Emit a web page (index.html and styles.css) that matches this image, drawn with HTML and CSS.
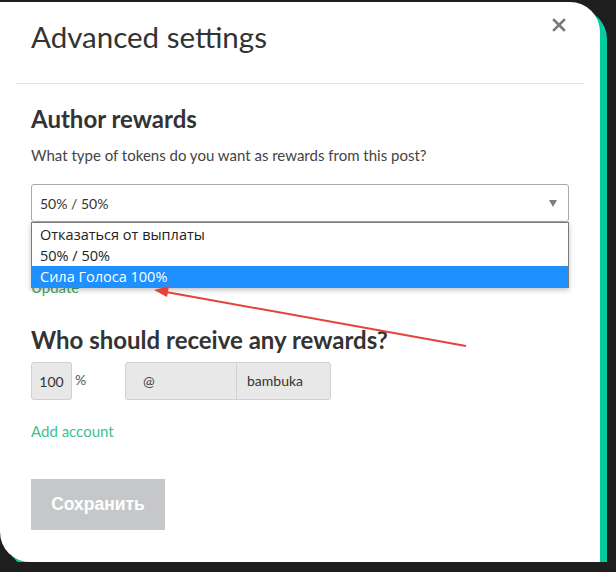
FILE: index.html
```html
<!DOCTYPE html>
<html lang="en">
<head>
  <meta charset="UTF-8">
  <title>Advanced settings</title>
  <link rel="stylesheet" href="styles.css">
</head>
<body>
  <div class="modal">
    <!-- close button -->
    <button class="close" aria-label="Close">
      <svg width="14" height="14" viewBox="0 0 14 14">
        <path d="M2 2 L12 12 M12 2 L2 12" stroke="#7a7a7a" stroke-width="2.6" stroke-linecap="square"/>
      </svg>
    </button>

    <div class="modal-header">
      <h1>Advanced settings</h1>
    </div>

    <div class="modal-body">
      <h2 class="section-title">Author rewards</h2>
      <p class="hint">What type of tokens do you want as rewards from this post?</p>

      <div class="select-wrap">
        <div class="select">
          <span>50% / 50%</span>
          <span class="caret"></span>
        </div>
        <ul class="options">
          <li>Отказаться от выплаты</li>
          <li>50% / 50%</li>
          <li class="active">Сила Голоса 100%</li>
        </ul>
      </div>
      <a class="link update" href="#">Update</a>

      <h2 class="section-title second">Who should receive any rewards?</h2>
      <div class="beneficiary">
        <div class="percent-box">100</div>
        <span class="percent-sign">%</span>
        <div class="account">
          <span class="at">@</span>
          <span class="account-name">bambuka</span>
        </div>
      </div>
      <a class="link add-account" href="#">Add account</a>

      <button class="save-btn">Сохранить</button>
    </div>

    <!-- red annotation arrow -->
    <svg class="annotation" width="600" height="560" viewBox="0 0 600 560">
      <line x1="466" y1="344" x2="166" y2="290" stroke="#e5423a" stroke-width="2"/>
      <polygon points="154,288 169,284 167,295" fill="#e5423a"/>
    </svg>
  </div>
</body>
</html>
```

FILE: styles.css
```css
/* page */
body {
  margin: 0;
  background: #1e1e1e;
  font-family: 'Lato', 'Liberation Sans', sans-serif;
  color: #333;
  overflow: hidden;
}

/* modal box with teal offset shadow */
.modal {
  position: relative;
  margin-top: 2px;
  width: 600px;
  height: 560px;
  background: #fff;
  border-radius: 0 30px 0 30px;
  box-shadow: 7px 7px 0 #05cc9f;
}

.close {
  position: absolute;
  top: 16px;
  right: 34px;
  padding: 0;
  border: none;
  background: none;
  cursor: pointer;
}

.modal-header {
  margin: 0 16px;
  padding: 18px 15px 29px;
  border-bottom: 1px solid #e6e6e6;
}
.modal-header h1 {
  margin: 0;
  font-size: 29.5px;
  line-height: 34px;
  font-weight: 400;
  color: #333;
}

.modal-body {
  padding: 21px 31px 0;
}

.section-title {
  margin: 0;
  font-size: 24px;
  line-height: 28px;
  font-weight: 700;
  color: #333;
}
.section-title.second {
  margin-top: 29px;
}

.hint {
  margin: 12px 0 19px;
  font-size: 15px;
  line-height: 20px;
  color: #444;
}

/* select with opened option list */
.select-wrap {
  position: relative;
}
.select {
  display: flex;
  align-items: center;
  justify-content: space-between;
  height: 36px;
  padding: 0 11px 0 8px;
  border: 1px solid #a9a9a9;
  border-radius: 3px;
  font-size: 14px;
  color: #333;
}
.caret {
  width: 0;
  height: 0;
  border-left: 4px solid transparent;
  border-right: 4px solid transparent;
  border-top: 7px solid #7d7d7d;
}
.options {
  position: absolute;
  top: 38px;
  left: 0;
  right: 0;
  margin: 0;
  padding: 1px 0 0;
  list-style: none;
  background: #fff;
  border: 1px solid #7a7a7a;
  box-shadow: 0 2px 5px rgba(0, 0, 0, 0.25);
  z-index: 2;
  font-family: 'Open Sans', sans-serif;
  font-size: 14.5px;
}
.options li {
  height: 21px;
  line-height: 21px;
  padding-left: 8px;
  color: #222;
}
.options li.active {
  background: #1e90ff;
  color: #fff;
}

.link {
  display: block;
  width: max-content;
  font-size: 15px;
  line-height: 20px;
  color: #3fbf8e;
  text-decoration: none;
}
.update {
  margin-top: 55px;
  color: #4aa86c;
}

.beneficiary {
  display: flex;
  align-items: flex-start;
  margin-top: 8px;
}
.percent-box {
  width: 39px;
  height: 36px;
  line-height: 38px;
  text-align: center;
  background: #e8e8e8;
  border: 1px solid #d0d0d0;
  border-radius: 3px;
  font-size: 14px;
}
.percent-sign {
  margin: 9px 0 0 3px;
  width: 50px;
  font-size: 14px;
  color: #555;
}
.account {
  display: flex;
  height: 36px;
  border: 1px solid #d0d0d0;
  border-radius: 3px;
  background: #e8e8e8;
  font-size: 14px;
  line-height: 36px;
}
.at {
  width: 93px;
  padding-left: 17px;
  border-right: 1px solid #d0d0d0;
  color: #444;
}
.account-name {
  width: 83px;
  padding-left: 10px;
  color: #333;
}

.add-account {
  margin-top: 21px;
}

.save-btn {
  display: block;
  margin-top: 38px;
  width: 134px;
  height: 51px;
  border: none;
  background: #c6c7c8;
  color: #fff;
  font-family: 'Liberation Sans', Arial, sans-serif;
  font-size: 17.5px;
  font-weight: 700;
}

.annotation {
  position: absolute;
  top: 0;
  left: 0;
  pointer-events: none;
  z-index: 3;
}
```
